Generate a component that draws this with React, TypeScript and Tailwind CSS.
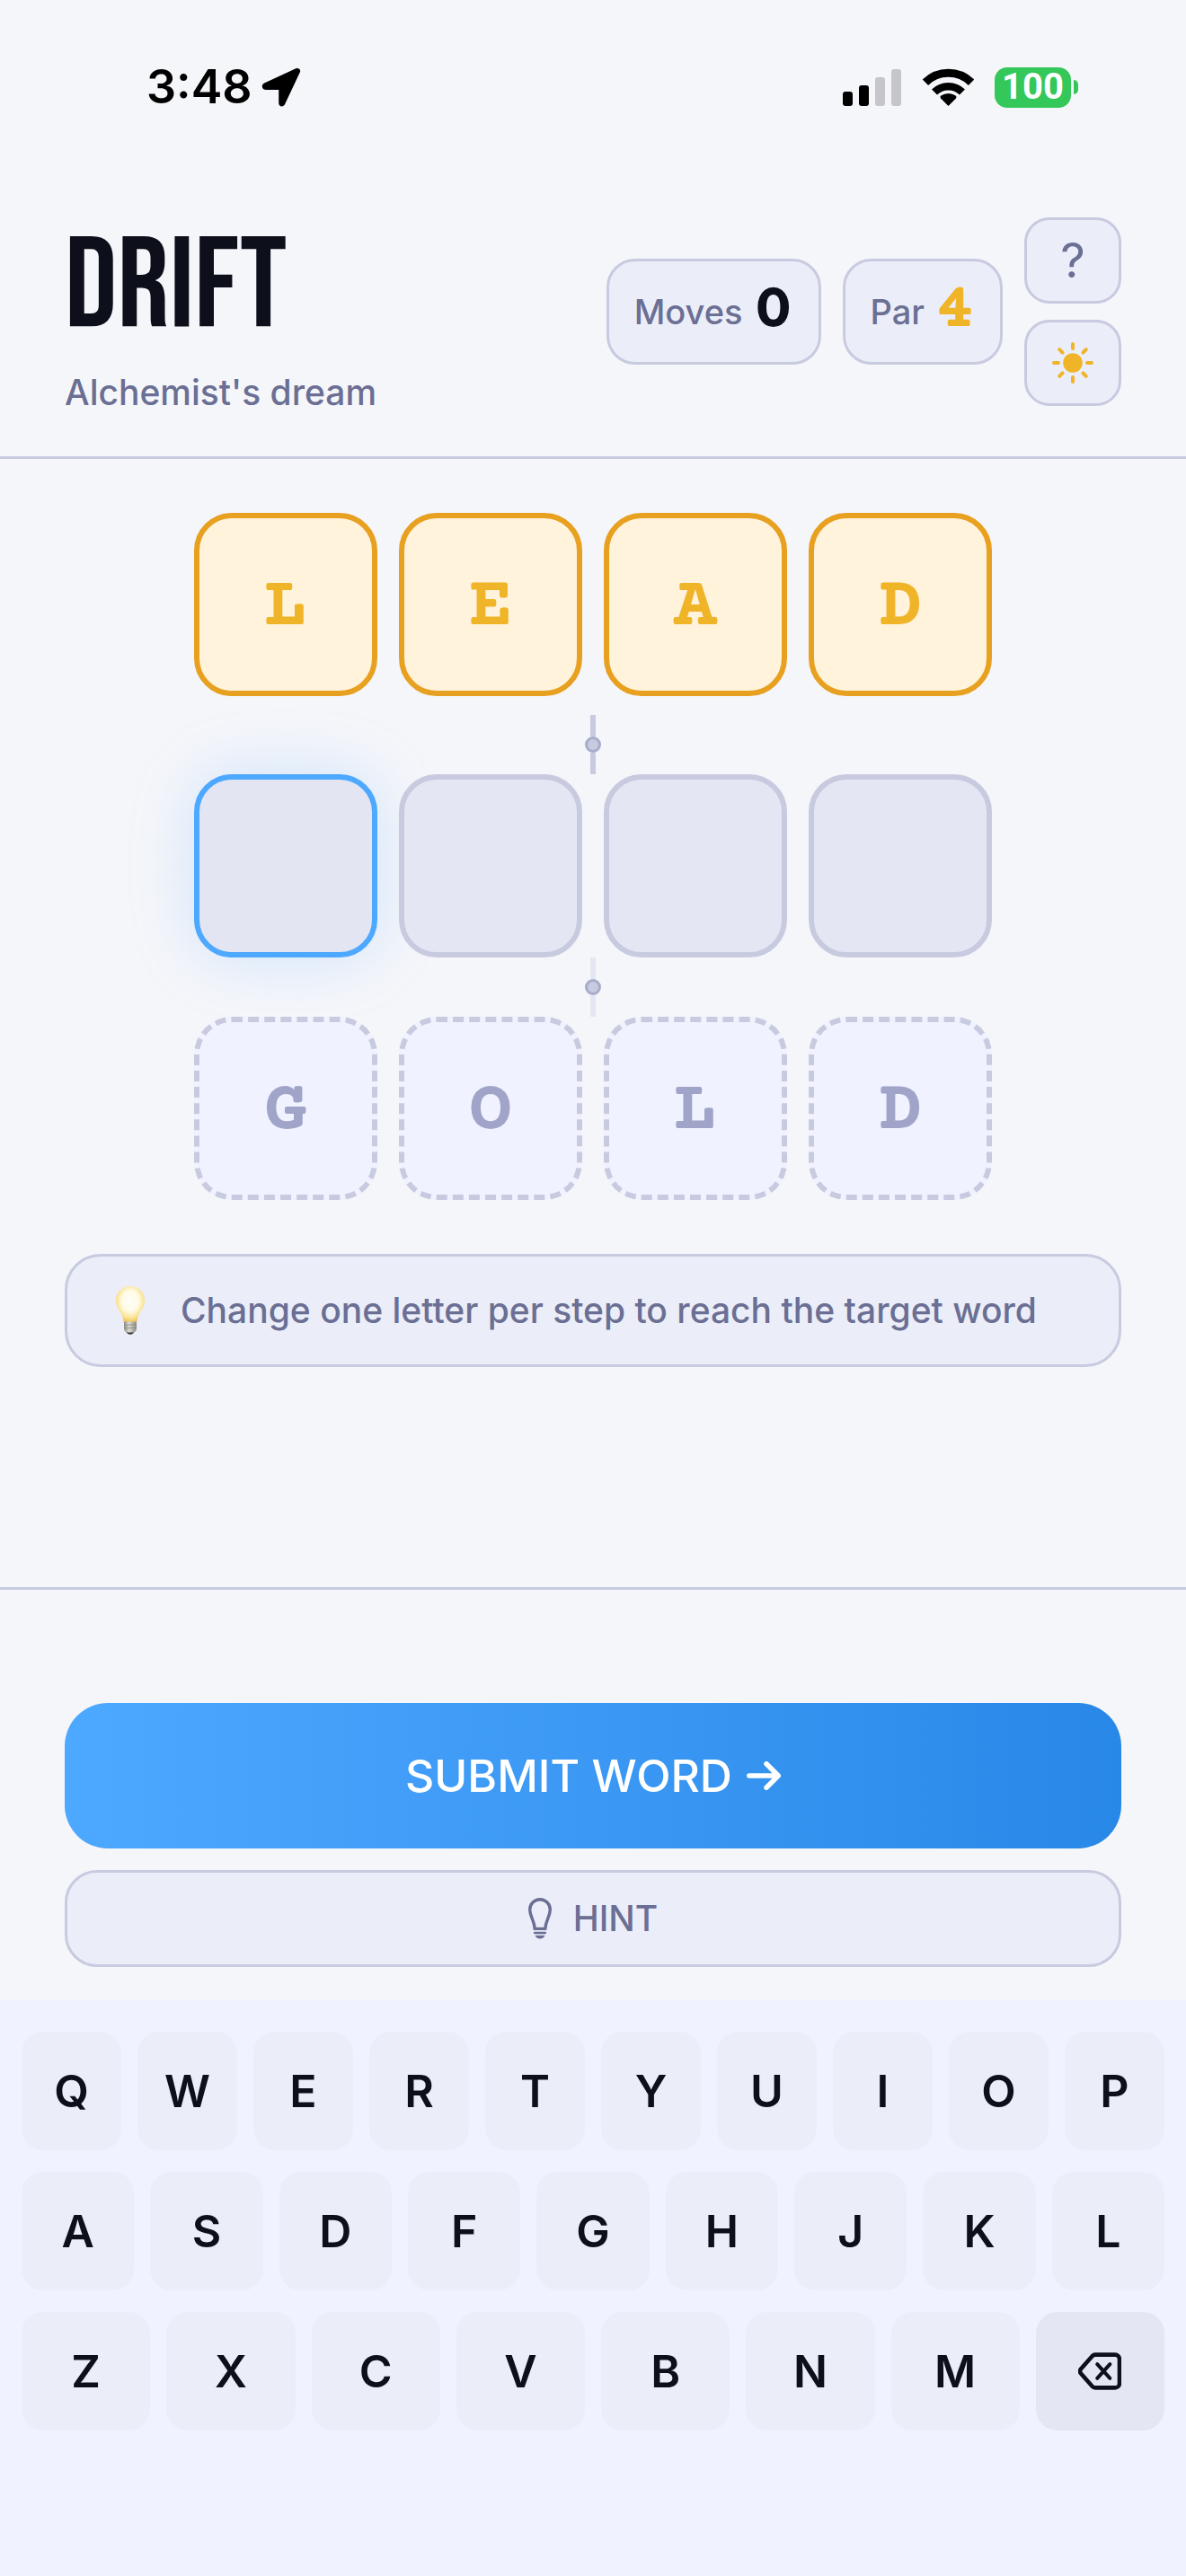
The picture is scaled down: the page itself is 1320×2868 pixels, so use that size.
import type { ReactNode } from "react";
import clsx from "clsx";

type TileState = "start" | "active" | "empty" | "target";

const KEY_ROWS = ["QWERTYUIOP", "ASDFGHJKL", "ZXCVBNM"];

const TILE_STYLES: Record<TileState, string> = {
  start: "border-[#e8a020] bg-[#fff3dc] text-[#f0b429]",
  active: "border-[#4da8ff] bg-[#e3e5f2] shadow-[0_0_72px_rgba(77,168,255,0.22)]",
  empty: "border-[#c8cae0] bg-[#e4e7f3]",
  target: "border-dashed border-[#c8cae0] bg-[#f0f2ff] text-[#a0a4c8]",
};

export default function App() {
  return (
    <div className="flex min-h-screen flex-col bg-[#f5f6fa] font-[Inter,sans-serif] text-[#0d0f1a]">
      <StatusBar />
      <Header />

      <main className="flex flex-1 flex-col px-18 pt-15">
        <WordRow word="LEAD" states={["start", "start", "start", "start"]} />
        <div className="pt-[21px]">
          <Connector lineClass="bg-[#c8cae0]" />
        </div>
        <WordRow word="    " states={["active", "empty", "empty", "empty"]} />
        <Connector lineClass="bg-[#e4e7f3]" />
        <WordRow word="GOLD" states={["target", "target", "target", "target"]} />

        <div className="mt-15 flex min-h-[126px] items-center gap-8 rounded-[40px] border-3 border-[#c8cae0] bg-[#ebeef8] px-[46px]">
          <BulbEmoji />
          <p className="text-[39px] leading-12 font-medium text-[#6b6f94]">
            Change one letter per step to reach the target word
          </p>
        </div>
      </main>

      {/* Actions */}
      <section className="flex flex-col gap-6 border-t-3 border-[#c8cae0] px-18 pt-[126px] pb-9">
        <button className="flex h-[162px] items-center justify-center gap-4 rounded-[48px] bg-linear-to-r from-[#4da8ff] to-[#2888e8] text-[50px] font-medium text-white">
          SUBMIT WORD
          <ArrowIcon />
        </button>
        <button className="flex h-27 items-center justify-center gap-6 rounded-[36px] border-3 border-[#c8cae0] bg-[#ebeef8] text-[39px] font-medium text-[#6b6f94]">
          <HintIcon />
          HINT
        </button>
      </section>

      <Keyboard />
    </div>
  );
}

function StatusBar() {
  return (
    <div className="flex h-[194px] items-center justify-between pr-30 pl-[163px]">
      <div className="flex items-center gap-2.5">
        <span className="text-[52px] leading-none font-semibold text-black">3:48</span>
        <svg className="h-11 w-11" viewBox="0 0 44 44" fill="#000">
          <path d="M38.3 1.3 3.2 17.6C-.6 19.4.2 25 4.6 25h14.6v14.8c0 4.3 5.3 4.9 6.9 1.2L42.8 5.6c1.4-3.1-1.5-5.7-4.5-4.3z" />
        </svg>
      </div>

      <div className="flex items-center gap-[23px]">
        <svg className="h-[42px] w-[66px]" viewBox="0 0 66 42">
          <rect x="0" y="26" width="11" height="16" rx="3" fill="#000" />
          <rect x="18" y="19" width="11" height="23" rx="3" fill="#000" />
          <rect x="36" y="10" width="11" height="32" rx="3" fill="#c5c5ca" />
          <rect x="54" y="1" width="11" height="41" rx="3" fill="#c5c5ca" />
        </svg>
        <svg className="h-[42px] w-[57px]" viewBox="0 0 57 42" fill="none" stroke="#000">
          <path d="M3 15.7a36.5 36.5 0 0 1 51 0" strokeWidth="9" />
          <path d="M13 26.6a22 22 0 0 1 31 0" strokeWidth="8.5" />
          <path d="M28.5 42 20 33.4a2 2 0 0 1 .3-2.8 14 14 0 0 1 16.4 0 2 2 0 0 1 .3 2.8z" fill="#000" stroke="none" />
        </svg>
        <div className="flex items-center gap-[3px]">
          <span className="flex h-[45px] w-[85px] items-center justify-center rounded-[14px] bg-[#34c759] font-[Roboto,sans-serif] text-[40px] leading-none font-bold text-white">
            100
          </span>
          <span className="h-4 w-[5px] rounded-r-full bg-[#34c759]" />
        </div>
      </div>
    </div>
  );
}

function Header() {
  return (
    <header className="flex items-center justify-between border-b-3 border-[#c8cae0] px-18 pt-[39px] pb-[47px]">
      <div className="pt-4">
        <h1 className="font-['Bebas_Neue',Oswald,'Roboto_Condensed',sans-serif] text-[144px] leading-none">DRIFT</h1>
        <p className="mt-5 text-[39px] leading-12 font-medium text-[#6b6f94]">Alchemist's dream</p>
      </div>

      <div className="flex items-center gap-6">
        <Stat label="Moves" value={0} />
        <Stat label="Par" value={4} highlight />
        <div className="flex flex-col gap-[18px]">
          <IconButton label="Help">
            <span className="text-[54px] leading-none text-[#6b6f94]">?</span>
          </IconButton>
          <IconButton label="Toggle theme">
            <SunIcon />
          </IconButton>
        </div>
      </div>
    </header>
  );
}

function Stat({ label, value, highlight }: { label: string; value: number; highlight?: boolean }) {
  return (
    <div className="flex h-[118px] items-center gap-3 rounded-[32px] border-3 border-[#c8cae0] bg-[#ebeef8] px-7">
      <span className="text-[38px] leading-none font-medium text-[#6b6f94]">{label}</span>
      <span
        className={clsx(
          "w-11 text-center font-['Courier_Prime','DejaVu_Serif_Condensed','DejaVu_Serif',serif] text-[74px] leading-none font-bold",
          highlight && "text-[#f0b429]"
        )}
      >
        {value}
      </span>
    </div>
  );
}

function IconButton({ label, children }: { label: string; children: ReactNode }) {
  return (
    <button
      aria-label={label}
      className="flex h-24 w-27 items-center justify-center rounded-[28px] border-3 border-[#c8cae0] bg-[#ebeef8]"
    >
      {children}
    </button>
  );
}

function WordRow({ word, states }: { word: string; states: TileState[] }) {
  return (
    <div className="flex justify-center gap-6">
      {states.map((state, i) => (
        <div
          key={i}
          className={clsx(
            "flex size-51 items-center justify-center rounded-[42px] border-6 pt-2 font-['Courier_Prime','DejaVu_Serif',serif] text-[80px] leading-none font-bold",
            TILE_STYLES[state]
          )}
        >
          {word[i]}
        </div>
      ))}
    </div>
  );
}

function Connector({ lineClass }: { lineClass: string }) {
  return (
    <div className="flex h-[66px] flex-col items-center">
      <span className={clsx("w-1.5 flex-1", lineClass)} />
      <span className="size-[18px] rounded-full border-3 border-[#a8acca] bg-[#c8cae0]" />
      <span className={clsx("w-1.5 flex-1", lineClass)} />
    </div>
  );
}

function Keyboard() {
  return (
    <div className="flex flex-col gap-6 bg-[#f0f2ff] px-6 pt-9 pb-[162px]">
      {KEY_ROWS.map((row, i) => (
        <div key={row} className="flex gap-[18px]">
          {row.split("").map((letter) => (
            <button key={letter} className="h-33 flex-1 rounded-3xl bg-[#ebeef8] text-[50px] font-semibold">
              {letter}
            </button>
          ))}
          {i === KEY_ROWS.length - 1 && (
            <button aria-label="Delete" className="flex h-33 flex-1 items-center justify-center rounded-3xl bg-[#e4e7f3]">
              <DeleteIcon />
            </button>
          )}
        </div>
      ))}
    </div>
  );
}

/* Icons */

function SunIcon() {
  return (
    <svg className="size-12" viewBox="0 0 48 48" fill="#f0b429" stroke="#f0b429" strokeWidth="4" strokeLinecap="round">
      <circle cx="24" cy="24" r="10.8" stroke="none" />
      <path d="M24 3v5M24 40v5M3 24h5M40 24h5M9.2 9.2l3.4 3.4M35.4 35.4l3.4 3.4M9.2 38.8l3.4-3.4M35.4 12.6l3.4-3.4" />
    </svg>
  );
}

function ArrowIcon() {
  return (
    <svg className="h-8 w-[38px]" viewBox="0 0 38 32" fill="none" stroke="#fff" strokeWidth="5.5" strokeLinecap="round" strokeLinejoin="round">
      <path d="M2.8 16H35M22 2.8 35.2 16 22 29.2" />
    </svg>
  );
}

function HintIcon() {
  return (
    <svg className="h-[46px] w-[26px]" viewBox="0 0 26 46" fill="none" stroke="#6b6f94" strokeWidth="3.4">
      <path d="M7.2 34.4C6.6 24.5 1.7 20.6 1.7 13A11.3 11.3 0 0 1 24.3 13c0 7.6-4.9 11.5-5.5 21.4z" />
      <path d="M7.2 39h11.6" strokeWidth="2.6" strokeLinecap="round" />
      <path d="M7.5 41.8h11c-.8 2.4-2.9 3.8-5.5 3.8s-4.7-1.4-5.5-3.8z" fill="#6b6f94" stroke="none" />
    </svg>
  );
}

function DeleteIcon() {
  return (
    <svg className="h-[42px] w-12" viewBox="0 0 48 42" fill="none" stroke="#0d0f1a" strokeWidth="4.6" strokeLinecap="round" strokeLinejoin="round">
      <path d="M19 2.6h22a5 5 0 0 1 5 5v26.8a5 5 0 0 1-5 5H19c-1.3 0-2.5-.6-3.4-1.6L3 23.4c-1.2-1.4-1.2-3.4 0-4.8L15.6 4.2c.9-1 2.1-1.6 3.4-1.6z" />
      <path d="m21.2 13.2 14.2 15.6M35.4 13.2 21.2 28.8" strokeWidth="4" />
    </svg>
  );
}

function BulbEmoji() {
  return (
    <svg className="h-[54px] w-12 shrink-0" viewBox="0 0 48 54" role="img" aria-label="Tip">
      <defs>
        <radialGradient id="glass" cx="0.5" cy="0.42" r="0.58">
          <stop offset="0" stopColor="#fffefa" />
          <stop offset="0.5" stopColor="#fffbe6" />
          <stop offset="0.85" stopColor="#fae08a" />
          <stop offset="1" stopColor="#efc65c" />
        </radialGradient>
        <linearGradient id="cap" x1="0" x2="1" y1="0" y2="0">
          <stop offset="0" stopColor="#8c8983" />
          <stop offset="0.4" stopColor="#dedbd5" />
          <stop offset="1" stopColor="#8c8983" />
        </linearGradient>
      </defs>
      <path d="M19 49.5h10c-.8 2.8-2.6 4.2-5 4.2s-4.2-1.4-5-4.2z" fill="#3a3a3a" />
      <path d="M17 39h14v8c0 2.6-1.7 4.5-4 4.5h-6c-2.3 0-4-1.9-4-4.5z" fill="url(#cap)" />
      <path d="M17 43.5l14-1M17 47l14-1" stroke="#8a8781" strokeWidth="0.8" />
      <path d="M24 0C14.6 0 8 7.2 8 16.2c0 5.600 2.600 9.200 5 12.800 2.200 3.400 2.900 6.800 3.600 10.500h14.800c.7-3.700 1.400-7.100 3.600-10.500 2.400-3.600 5-7.200 5-12.800C40 7.200 33.400 0 24 0z" fill="url(#glass)" />
    </svg>
  );
}
